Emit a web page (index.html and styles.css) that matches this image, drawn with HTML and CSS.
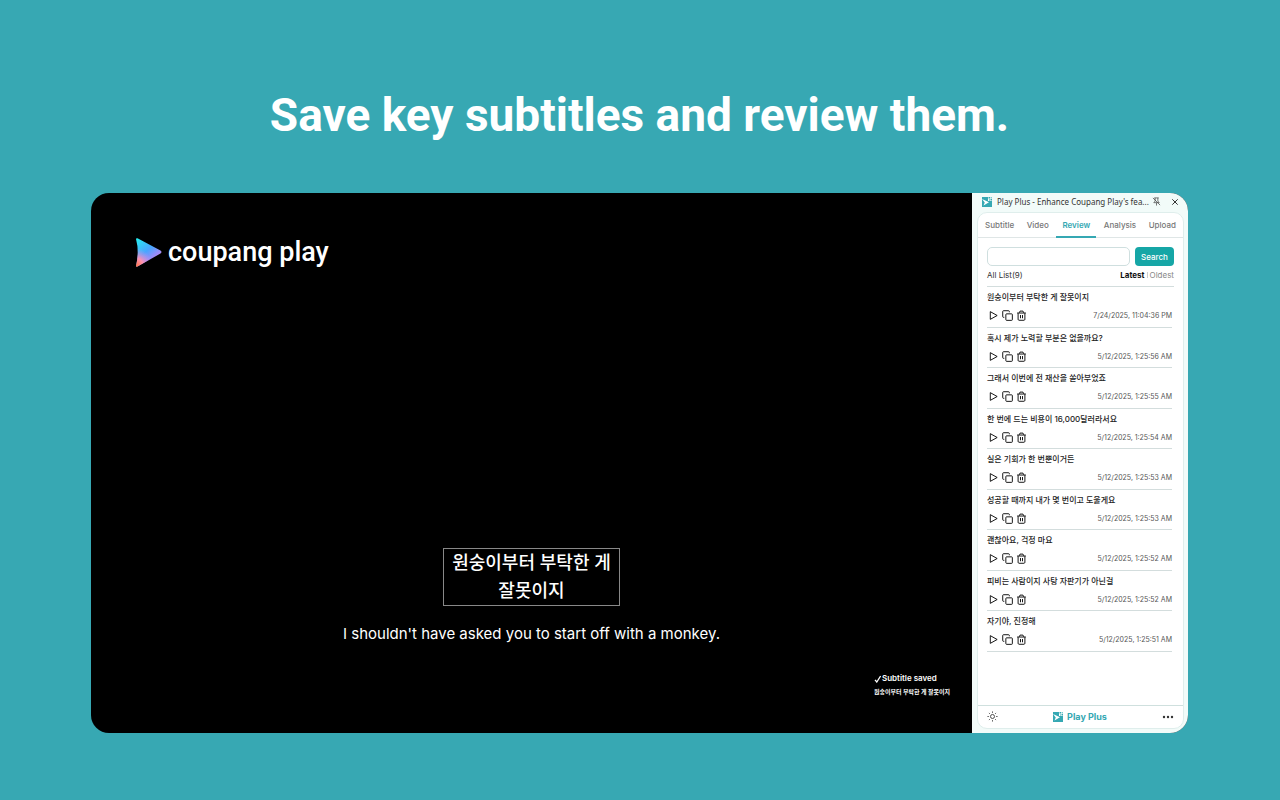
FILE: index.html
```
<!DOCTYPE html>
<html lang="en">
<head>
<meta charset="utf-8">
<title>Play Plus</title>
<link rel="stylesheet" href="styles.css">
</head>
<body>
<svg width="0" height="0" class="defs" aria-hidden="true">
  <symbol id="play" viewBox="0 0 12 12"><path d="M2.5 1.8 10 6 2.5 10.2z" fill="none" stroke="currentColor" stroke-linejoin="round"/></symbol>
  <symbol id="copy" viewBox="0 0 12 12"><path d="M5 4.200h5.500c.5 0 .8.300.8.800v5.500c0 .5-.3.800-.8.800H5c-.5 0-.8-.3-.8-.8V5c0-.5.300-.8.800-.8zM2.500 8H1.600a.8.800 0 0 1-.8-.8V1.600c0-.5.300-.8.800-.8h5.600c.5 0 .8.300.8.800v.9" fill="none" stroke="currentColor" stroke-linejoin="round"/></symbol>
  <symbol id="trash" viewBox="0 0 12 12"><path d="M1.200 3.300h9.600M3.600 3l.8-1.800h3.200L8.400 3M2.300 3.500v6.700c0 .6.400 1 1 1h5.400c.6 0 1-.4 1-1V3.500M4.900 5.500v3.500M7.100 5.500v3.500" fill="none" stroke="currentColor" stroke-linejoin="round"/></symbol>
  <symbol id="mark" viewBox="0 0 20 20"><path d="M0 0h12v8h8v12H0z" fill="#35a8b3"/><path d="M0 4l14 6.500L3 17l2.500-6z" fill="#fff"/><path d="M14 5h2v2h-2zM13 0h3v3h-3zM17 4h3v3h-3z" fill="#35a8b3"/><path d="M17 0h3v3h-3z" fill="#7ccbd0"/></symbol>
</svg>
<main class="page">
  <h1 class="headline">Save key subtitles and review them.</h1>
  <div class="frame">
    <section class="video">
      <div class="logo">
        <svg class="logo-mark" viewBox="0 0 26 29" aria-hidden="true">
          <defs>
            <linearGradient id="g1" x1="0" y1="0" x2=".7" y2="1"><stop offset="0" stop-color="#22f0f0"/><stop offset=".5" stop-color="#4aa5ff"/><stop offset=".75" stop-color="#9a8cf8"/><stop offset="1" stop-color="#e58fe0"/></linearGradient>
            <radialGradient id="g2" cx="0" cy="1" r=".65"><stop offset="0" stop-color="#ff7038"/><stop offset=".45" stop-color="#ff92b0"/><stop offset="1" stop-color="#d78cf0" stop-opacity="0"/></radialGradient>
          </defs>
          <path d="M0 1Q0 0 1.500.300L24.500 12.500Q26.500 14.200 24.500 15.500L1.500 28.500Q0 29 0 28Q3.500 14 0 1z" fill="url(#g1)"/>
          <path d="M0 1Q0 0 1.500.300L24.500 12.500Q26.500 14.200 24.500 15.500L1.500 28.500Q0 29 0 28Q3.500 14 0 1z" fill="url(#g2)"/>
        </svg>
        <span class="logo-text">coupang play</span>
      </div>
      <div class="captions">
        <p class="caption-ko" lang="ko">원숭이부터 부탁한 게<br>잘못이지</p>
        <p class="caption-en">I shouldn't have asked you to start off with a monkey.</p>
      </div>
      <div class="toast"><strong><svg class="check" viewBox="0 0 8 8" aria-hidden="true"><path d="M1 4.800 2.800 7 6.600 1" fill="none" stroke="#fff" stroke-width="1.300"/></svg>Subtitle saved</strong><span lang="ko">원숭이부터 부탁한 게 잘못이지</span></div>
    </section>
    <aside class="panel">
      <header class="titlebar">
        <svg class="mark" aria-hidden="true"><use href="#mark"/></svg>
        <span class="title">Play Plus - Enhance Coupang Play's fea...</span>
        <button class="plain" aria-label="Unpin"><svg class="pin" viewBox="0 0 10 10" aria-hidden="true"><path d="M2.500 1h5M3.500 1v3.500L2 6.300h6L6.500 4.500V1M5 6.500V9.500M1 1l8 8" fill="none" stroke="#444" stroke-width=".8"/></svg></button>
        <button class="plain" aria-label="Close"><svg class="close" viewBox="0 0 8 8" aria-hidden="true"><path d="M1.300 1.300l5.400 5.400M6.700 1.300 1.300 6.700" stroke="#333"/></svg></button>
      </header>
      <div class="card">
        <nav class="tabs">
          <button class="tab">Subtitle</button><button class="tab">Video</button><button class="tab active">Review</button><button class="tab">Analysis</button><button class="tab">Upload</button>
        </nav>
        <div class="content">
          <form class="search"><input type="text" class="field" aria-label="Search subtitles"><button type="button" class="submit">Search</button></form>
          <div class="summary"><span>All List(9)</span><span class="sort"><button class="plain latest">Latest</button><i class="bar"></i><button class="plain oldest">Oldest</button></span></div>
          <ul class="list" id="list"></ul>
        </div>
        <footer class="footer">
          <button class="plain" aria-label="Theme"><svg class="sun" viewBox="0 0 12 12" aria-hidden="true"><path d="M6 .500v1.500M6 10v1.500M.500 6H2M10 6h1.500M2.100 2.100l1 1M8.900 8.900l1 1M2.100 9.900l1-1M8.900 3.100l1-1" stroke="#444"/><circle cx="6" cy="6" r="2.200" fill="none" stroke="#444"/></svg></button>
          <span class="brand"><svg class="mark" aria-hidden="true"><use href="#mark"/></svg>Play Plus</span>
          <button class="plain" aria-label="More"><svg class="dots" viewBox="0 0 12 4" aria-hidden="true"><g fill="#333"><circle cx="2" cy="2" r="1.200"/><circle cx="6" cy="2" r="1.200"/><circle cx="10" cy="2" r="1.200"/></g></svg></button>
        </footer>
      </div>
    </aside>
  </div>
</main>
<script src="app.js"></script>
</body>
</html>
```
FILE: styles.css
```
* { box-sizing: border-box; }
body { margin: 0; min-height: 100vh; background: #37a8b3; font-family: Inter, "Noto Sans CJK KR", sans-serif; }
h1, p, ul { margin: 0; padding: 0; }
button { font: inherit; cursor: pointer; }
.defs { position: absolute; }
.page { padding: 85px 92px 67px 91px; }
.headline { color: #fff; font: bold 46px/60px Roboto, sans-serif; text-align: center; margin-bottom: 48px; }
.frame { display: grid; grid-template-columns: 1fr 216px; min-height: 540px; border-radius: 18px; overflow: hidden; background: #000; }
.video { display: flex; flex-direction: column; color: #fff; padding: 42px 16px 34px 45px; }
.logo { display: flex; align-items: center; gap: 6px; }
.logo-mark { width: 26px; height: 29px; }
.logo-text { font: 500 27px/34px Roboto, sans-serif; }
.captions { margin: auto 0 0 -29px; padding-top: 40px; display: flex; flex-direction: column; align-items: center; }
.caption-ko { border: 1px solid #888; padding: 0 8px; font-size: 18px; font-weight: 500; line-height: 28px; text-align: center; }
.caption-en { margin-top: 16px; font-size: 15px; line-height: 24px; }
.toast { align-self: flex-end; margin-top: 26px; padding: 0 6px 1px 0; display: flex; flex-direction: column; font-size: 8px; line-height: 13px; }
.toast strong { display: flex; align-items: center; font-weight: 600; }
.toast span { font-size: 6px; font-weight: 700; }
.check { width: 8px; height: 8px; }
.panel { display: flex; flex-direction: column; background: #f2fbf9; padding: 0 4px 4px 5px; }
.plain { border: 0; padding: 0; background: none; display: flex; align-items: center; }
.titlebar { display: flex; align-items: center; height: 19px; padding: 0 5px 2px; gap: 5px; }
.mark { width: 10px; height: 10px; }
.title { flex: 1; min-width: 0; font: 8px/12px "Noto Sans", sans-serif; color: #333; white-space: nowrap; }
.pin { width: 9px; height: 9px; }
.close { width: 8px; height: 8px; margin-left: 5px; }
.card { flex: 1; display: flex; flex-direction: column; background: #fff; border: 1px solid #dfeeec; border-radius: 10px; }
.tabs { display: flex; justify-content: space-between; height: 25px; padding: 0 2px; border-bottom: 1px solid #dfe6e6; }
.tab { border: 0; padding: 0 5px; background: none; color: #777; font-size: 8px; font-weight: 500; height: 25px; border-top: 1px solid transparent; border-bottom: 2px solid transparent; }
.tab.active { padding: 0 6px; color: #35a8b3; font-weight: 600; border-bottom-color: #35a8b3; }
.content { flex: 1; padding: 9px 9px 0; }
.search { display: flex; gap: 5px; }
.field { flex: 1; min-width: 0; height: 19px; border: 1px solid #cfdfdf; border-radius: 5px; background: #fff; padding: 0 6px; font-size: 8px; }
.submit { width: 39px; height: 19px; border: 0; border-radius: 4px; padding: 0; background: #16a6a6; color: #fff; font-size: 8px; font-weight: 500; }
.summary { display: flex; justify-content: space-between; align-items: center; height: 21px; padding-bottom: 2px; border-bottom: 1px solid #d3dddd; font-size: 8px; color: #333; }
.sort { display: flex; align-items: center; gap: 2px; }
.latest { color: #111; font-weight: 700; }
.oldest { color: #888; }
.bar { width: 1px; height: 6px; background: #ccc; }
.list { list-style: none; display: grid; grid-auto-rows: 1fr; height: 365px; margin-right: 2px; }
.item { display: flex; flex-direction: column; border-bottom: 1px solid #d3dddd; padding-top: 4px; }
.text { font-size: 8px; font-weight: 500; line-height: 12px; color: #222; white-space: nowrap; }
.meta { display: flex; align-items: center; gap: 3px; padding: 7px 0 0 1px; color: #555; }
.meta svg { width: 11px; height: 11px; }
.meta time { margin-left: auto; font-size: 7px; }
.footer { display: flex; justify-content: space-between; align-items: center; height: 23px; border-top: 1px solid #cfe0de; padding: 0 9px 1px; }
.brand { display: flex; align-items: center; gap: 4px; color: #35a8b3; font-size: 9px; font-weight: 700; }
.sun { width: 11px; height: 11px; }
.dots { width: 12px; height: 4px; }
```
FILE: app.js
```
const items = [
  ["원숭이부터 부탁한 게 잘못이지", "7/24/2025, 11:04:36 PM"],
  ["혹시 제가 노력할 부분은 없을까요?", "5/12/2025, 1:25:56 AM"],
  ["그래서 이번에 전 재산을 쏟아부었죠", "5/12/2025, 1:25:55 AM"],
  ["한 번에 드는 비용이 16,000달러라서요", "5/12/2025, 1:25:54 AM"],
  ["실은 기회가 한 번뿐이거든", "5/12/2025, 1:25:53 AM"],
  ["성공할 때까지 내가 몇 번이고 도울게요", "5/12/2025, 1:25:53 AM"],
  ["괜찮아요, 걱정 마요", "5/12/2025, 1:25:52 AM"],
  ["피비는 사람이지 사탕 자판기가 아닌걸", "5/12/2025, 1:25:52 AM"],
  ["자기야, 진정해", "5/12/2025, 1:25:51 AM"]
];
const action = (id, label) => `<button class="plain" aria-label="${label}"><svg><use href="#${id}"/></svg></button>`;
document.getElementById("list").innerHTML = items.map(([text, time]) => `
  <li class="item"><p class="text" lang="ko">${text}</p>
  <div class="meta">${action("play", "Play")}${action("copy", "Copy")}${action("trash", "Delete")}<time>${time}</time></div></li>`).join("");
```
